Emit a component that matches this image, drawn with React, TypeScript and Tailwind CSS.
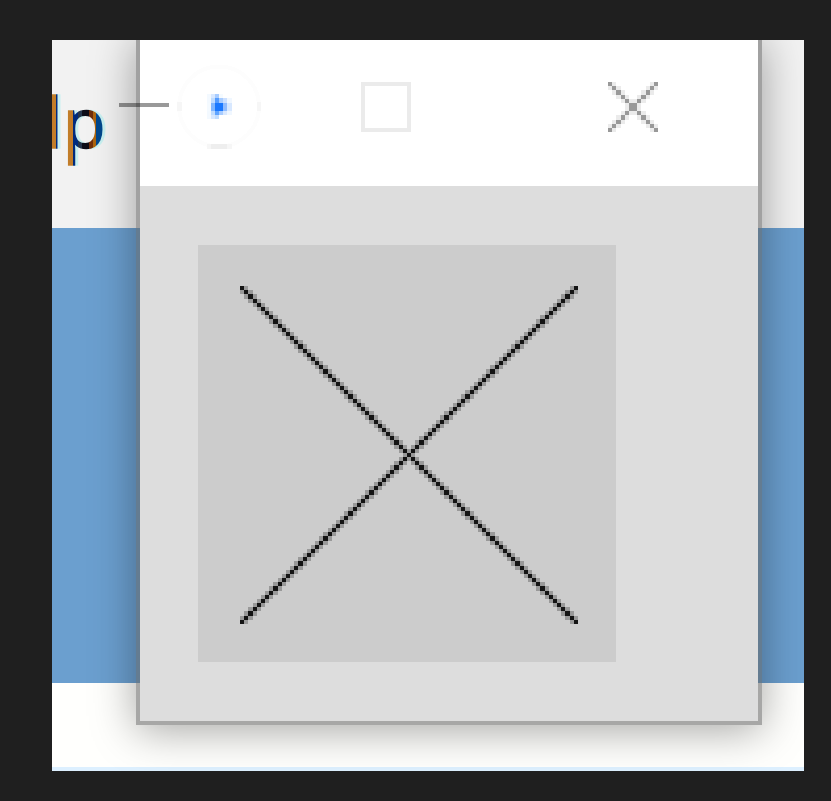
import React from "react";

type Cell = [number, number, number, number, string];

const cursorCells: Cell[] = [
  [207, 94, 4, 4, "#f3f9ff"], [211, 94, 4, 4, "#d8e8ff"], [215, 94, 4, 4, "#a8ccff"], [219, 94, 4, 4, "#f4faff"],
  [207, 98, 4, 5, "#f3f9ff"], [211, 98, 4, 5, "#c0dcff"], [215, 98, 4, 5, "#549cff"], [219, 98, 4, 5, "#a8ccff"], [223, 98, 4, 5, "#cce0ff"], [227, 98, 5, 5, "#f0f7ff"],
  [207, 103, 4, 8, "#f4faff"], [211, 103, 4, 8, "#80b6ff"], [215, 103, 8, 8, "#1a78ff"], [223, 103, 4, 8, "#90bcff"], [227, 103, 5, 8, "#d8e8ff"],
  [207, 111, 4, 4, "#f3f9ff"], [211, 111, 4, 4, "#c0dcff"], [215, 111, 4, 4, "#60a4ff"], [219, 111, 4, 4, "#a8ccff"], [223, 111, 4, 4, "#d8e8ff"], [227, 111, 5, 4, "#f0f7ff"],
  [207, 115, 4, 4, "#f3f9ff"], [211, 115, 4, 4, "#d8e8ff"], [215, 115, 4, 4, "#c0dcff"],
];

function PixelCross({ size, ink, soft, className }: { size: number; ink: string; soft: string; className: string }) {
  const steps = Array.from({ length: size }, (_, i) => i);
  return (
    <svg className={className} viewBox={`0 0 ${size} ${size}`} preserveAspectRatio="none" shapeRendering="crispEdges">
      {steps.map((i) => (
        <g key={i} fill={soft}>
          {i < size - 1 && <rect x={i + 1} y={i} width="1" height="1" />}
          {i > 0 && <rect x={i - 1} y={i} width="1" height="1" />}
          {i < size - 1 && <rect x={size - 2 - i} y={i} width="1" height="1" />}
          {i > 0 && <rect x={size - i} y={i} width="1" height="1" />}
        </g>
      ))}
      {steps.map((i) => (
        <g key={i} fill={ink}>
          <rect x={i} y={i} width="1" height="1" />
          <rect x={size - 1 - i} y={i} width="1" height="1" />
        </g>
      ))}
    </svg>
  );
}

function Cursor() {
  return (
    <svg className="h-[85px] w-[84px]" viewBox="177 64 84 85" shapeRendering="crispEdges">
      <circle cx="219" cy="106.5" r="40" fill="none" stroke="#fdfdfd" strokeWidth="4" />
      <path fill="#f6f6f6" d="M177 102h5v9h-5z M257 102h4v9h-4z" />
      <path fill="#f6f6f6" d="M207 144h25v5h-25z" />
      <path fill="#eeeeee" d="M211 144h16v5h-16z" />
      {cursorCells.map(([x, y, w, h, c]) => (
        <rect key={`${x}-${y}`} x={x} y={y} width={w} height={h} fill={c} />
      ))}
    </svg>
  );
}

function Window() {
  return (
    <section className="absolute -top-1 left-[84px] flex h-[689px] w-[626px] flex-col border-4 border-[#5e5e5e]/55 bg-clip-padding shadow-[0_5px_41px_rgba(0,0,0,0.36)]">
      <header className="flex h-[146px] shrink-0 items-start bg-white">
        <div className="mt-6 ml-[37px]"><Cursor /></div>
        <div className="mt-[42px] ml-[100px] size-[50px] border-4 border-[#ebebeb]" />
        <PixelCross size={12} ink="#999999" soft="#ebebeb" className="mt-[42px] ml-[197px] size-[50px]" />
      </header>
      <div className="flex-1 bg-[#dddddd] pt-[59px] pl-[58px]">
        <div className="h-[417px] w-[418px] bg-[#cccccc] pt-[41px] pl-[42px]">
          <PixelCross size={81} ink="#141414" soft="#999999" className="size-[338px]" />
        </div>
      </div>
    </section>
  );
}

export default function App() {
  return (
    <main className="h-[801px] w-[831px] overflow-hidden bg-[#1f1f1f] pt-10 pl-[52px]">
      <div className="relative h-[731px] w-[752px] overflow-hidden">
        <div className="h-[188px] bg-[#f2f2f2] pt-8">
          <div className="-ml-[7px] w-[70px] bg-[linear-gradient(90deg,#c27d29_0_11px,#002b7c_11px_19px,#c27d29_19px_28px,#002b7c_28px_33px,#24364d_33px_37px,#0c0d18_37px_44px,#70300c_44px_48px,#ad650f_48px_51px,#00478c_51px_70px)] bg-clip-text font-['Open_Sans',sans-serif] text-[70px] leading-[98px] text-transparent drop-shadow-[3px_0_0_#c8f0f0] [-webkit-text-stroke:1.6px_transparent]">
            lp
          </div>
        </div>
        <div className="h-[455px] bg-[#6b9fcf]" />
        <div className="h-[84px] bg-[#fffffd]" />
        <div className="h-1 bg-[#ddf0ff]" />
        <Window />
        <div className="absolute top-[63px] left-[67px] h-1 w-[50px] bg-black/40" />
      </div>
    </main>
  );
}
